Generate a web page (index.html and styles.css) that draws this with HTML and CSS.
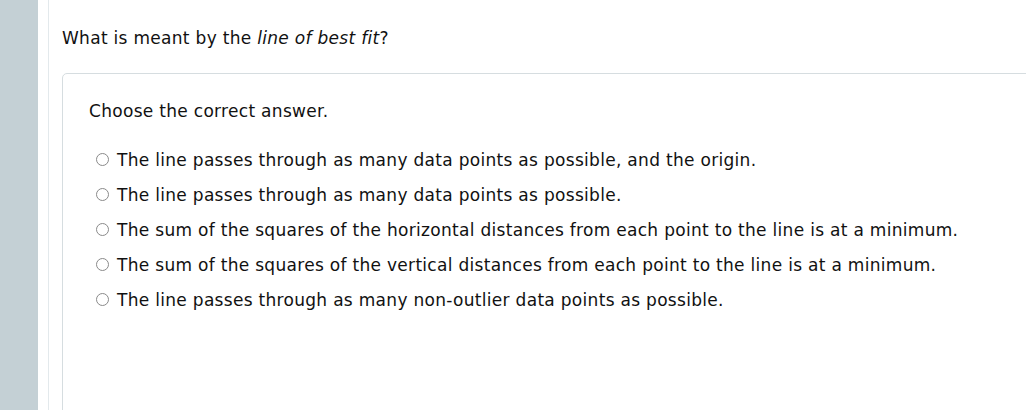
FILE: index.html
```html
<!DOCTYPE html>
<html>
<head>
<meta charset="utf-8">
<link rel="stylesheet" href="styles.css">
</head>
<body>
<div class="page">
  <div class="sidebar"></div>
  <div class="gutter"></div>
  <div class="content">
    <p class="question">What is meant by the <em>line of best fit</em>?</p>
    <div class="answer-box">
      <p class="prompt">Choose the correct answer.</p>
      <ul class="options">
        <li class="option"><span class="radio"></span><span>The line passes through as many data points as possible, and the origin.</span></li>
        <li class="option"><span class="radio"></span><span>The line passes through as many data points as possible.</span></li>
        <li class="option"><span class="radio"></span><span>The sum of the squares of the horizontal distances from each point to the line is at a minimum.</span></li>
        <li class="option"><span class="radio"></span><span>The sum of the squares of the vertical distances from each point to the line is at a minimum.</span></li>
        <li class="option"><span class="radio"></span><span>The line passes through as many non-outlier data points as possible.</span></li>
      </ul>
    </div>
  </div>
</div>
</body>
</html>
```

FILE: styles.css
```css
html, body {
  margin: 0;
  padding: 0;
  background: #fff;
  overflow: hidden;
}
body {
  font-family: "DejaVu Sans", Verdana, sans-serif;
  font-size: 17px;
  letter-spacing: 0.3px;
  color: #111;
}
.page {
  display: flex;
  height: 410px;
  overflow: hidden;
}
.sidebar {
  width: 38px;
  flex: none;
  background: #c4d0d5;
}
.gutter {
  width: 10px;
  flex: none;
  border-right: 1px solid #e3e9ec;
}
.content {
  flex: 1;
  padding-left: 13px;
  min-width: 0;
}
.question {
  margin: 28px 0 0 0;
  line-height: 20px;
}
.answer-box {
  margin-top: 25px;
  margin-right: -20px;
  border: 1px solid #d6dde0;
  border-radius: 5px;
  height: 400px;
  padding: 27px 0 0 26px;
}
.prompt {
  margin: 0;
  line-height: 20px;
}
.options {
  list-style: none;
  margin: 21px 0 0 0;
  padding: 0;
}
.option {
  display: flex;
  align-items: center;
  height: 35px;
  line-height: 20px;
}
.radio {
  width: 11px;
  height: 11px;
  border: 1px solid #8a8a8a;
  border-radius: 50%;
  margin: 0 8px 0 7px;
  flex: none;
}
```
